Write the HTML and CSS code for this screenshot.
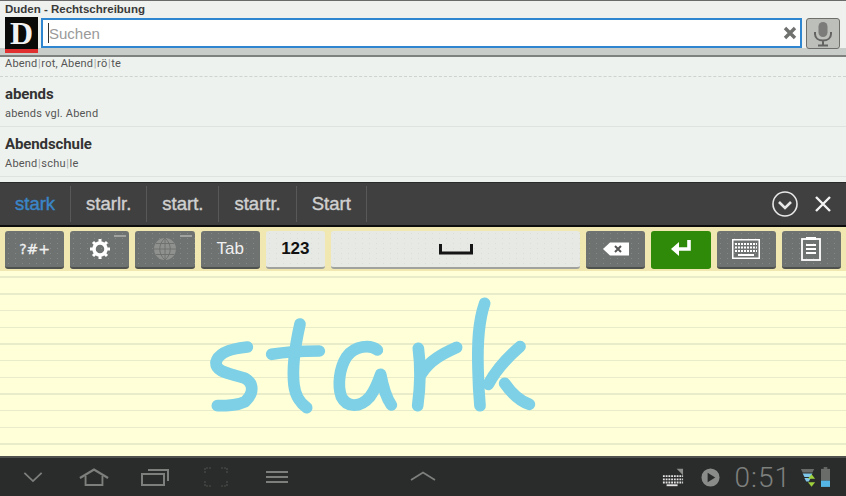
FILE: index.html
```html
<!DOCTYPE html>
<html lang="de">
<head>
    <meta charset="UTF-8">
    <title>Duden - Rechtschreibung</title>
    <link rel="stylesheet" href="styles.css">
</head>
<body>
    <div class="header">
        <div class="app-title">Duden - Rechtschreibung</div>
        <div class="search-row">
            <div class="logo"><span class="logo-letter">D</span></div>
            <div class="search-box">
                <span class="caret"></span>
                <span class="placeholder">Suchen</span>
                <svg class="clear-icon" width="16" height="16" viewBox="0 0 16 16"><path d="M3 3L13 13M13 3L3 13" stroke="#6f716f" stroke-width="3.4" fill="none"/></svg>
            </div>
            <div class="mic-button">
                <svg width="20" height="26" viewBox="0 0 20 26"><rect x="5.5" y="1" width="9" height="15" rx="4.5" fill="#7c7d7a"/><path d="M2 11v2c0 4 3.5 6.5 8 6.5s8-2.500 8-6.500v-2M10 19.500V24M5 24.500h10" stroke="#636462" stroke-width="2" fill="none"/></svg>
            </div>
        </div>
    </div>

    <div class="results">
        <div class="result result-cut">
            <div class="result-sub">Abend<span class="sep">|</span>rot, Abend<span class="sep">|</span>rö<span class="sep">|</span>te</div>
        </div>
        <div class="result">
            <div class="result-title">abends</div>
            <div class="result-sub">abends vgl. Abend</div>
        </div>
        <div class="result">
            <div class="result-title">Abendschule</div>
            <div class="result-sub">Abend<span class="sep">|</span>schu<span class="sep">|</span>le</div>
        </div>
    </div>

    <div class="candidates">
        <div class="candidate candidate-active">stark</div>
        <div class="candidate">starlr.</div>
        <div class="candidate">start.</div>
        <div class="candidate">startr.</div>
        <div class="candidate">Start</div>
        <div class="candidate-actions">
            <svg width="28" height="28" viewBox="0 0 28 28"><circle cx="14" cy="14" r="12" stroke="#e8e8e8" stroke-width="1.6" fill="none"/><path d="M8 12l6 6 6-6" stroke="#e8e8e8" stroke-width="2.600" fill="none"/></svg>
            <svg width="18" height="18" viewBox="0 0 18 18"><path d="M2 2L16 16M16 2L2 16" stroke="#f4f4f4" stroke-width="2.400" fill="none"/></svg>
        </div>
    </div>

    <div class="keys">
        <div class="key key-sym">?#+</div>
        <div class="key key-mark">
            <svg width="22" height="22" viewBox="0 0 22 22"><circle cx="11" cy="11" r="6" stroke="#fff" stroke-width="3.500" fill="none"/><path d="M11 1v4M11 17v4M1 11h4M17 11h4M4 4l3 3M15 15l3 3M18 4l-3 3M7 15l-3 3" stroke="#fff" stroke-width="3"/></svg>
        </div>
        <div class="key key-mark">
            <svg width="24" height="24" viewBox="0 0 24 24"><circle cx="12" cy="12" r="11" fill="#8f918e"/><path d="M12 1v22M1 12h22M3 6.500h18M3 17.500h18M12 1c-7 6-7 16 0 22M12 1c7 6 7 16 0 22" stroke="#6f726f" stroke-width="1" fill="none"/></svg>
        </div>
        <div class="key key-tab">Tab</div>
        <div class="key key-light key-num">123</div>
        <div class="key key-light key-space">
            <svg width="34" height="12" viewBox="0 0 34 12"><path d="M1.500 1v9h31V1" stroke="#161616" stroke-width="3" fill="none"/></svg>
        </div>
        <div class="key">
            <svg width="26" height="14" viewBox="0 0 26 14"><path d="M7 0.500h19v13H7L0 7z" fill="#fff"/><path d="M12 4l6 6M18 4l-6 6" stroke="#555" stroke-width="2"/></svg>
        </div>
        <div class="key key-enter">
            <svg width="22" height="20" viewBox="0 0 22 20"><path d="M19 1v9H6" stroke="#fff" stroke-width="3.600" fill="none"/><path d="M9 3L1 10l8 7z" fill="#fff"/></svg>
        </div>
        <div class="key">
            <svg width="28" height="20" viewBox="0 0 28 20"><rect x="0.750" y="0.750" width="26.500" height="18.500" fill="none" stroke="#fff" stroke-width="1.500"/><path d="M3 5h22M3 8.500h22M3 12h22" stroke="#fff" stroke-width="2" stroke-dasharray="2 1"/><path d="M6 16h16" stroke="#fff" stroke-width="2"/></svg>
        </div>
        <div class="key">
            <svg width="20" height="24" viewBox="0 0 20 24"><rect x="1" y="2" width="18" height="21" fill="none" stroke="#fff" stroke-width="1.800"/><rect x="5" y="0" width="10" height="3" fill="#fff"/><path d="M5 8h10M5 12h10M5 16h10" stroke="#fff" stroke-width="1.800"/></svg>
        </div>
    </div>

    <div class="pad">
        <!-- pen strokes of the handwriting pad -->
        <svg class="ink" width="360" height="135" viewBox="0 0 1080 405" role="img" aria-label="stark">
            <g fill="none" stroke="#7dd0e6" stroke-width="35" stroke-linecap="round" stroke-linejoin="round">
                <path d="M172 186C130 190 85 200 78 232C76 262 120 265 165 280C192 295 192 325 165 350C140 362 110 362 82 362"/>
                <path d="M330 117C318 170 305 240 312 300C316 335 335 358 350 368"/>
                <path d="M245 208C290 200 345 198 388 198"/>
                <path d="M562 195C540 178 495 182 470 215C448 250 442 300 454 335C470 368 510 370 540 335C558 310 566 285 572 268C578 300 590 340 604 360"/>
                <path d="M685 190C692 240 690 310 683 362"/>
                <path d="M695 265C720 225 760 205 800 187"/>
                <path d="M884 55C865 110 862 170 864 250C865 300 868 340 870 362"/>
                <path d="M990 185C955 215 915 260 895 298"/>
                <path d="M944 295C965 325 990 348 1018 358"/>
            </g>
        </svg>
    </div>

    <div class="navbar">
        <div class="nav-left">
            <svg width="20" height="12" viewBox="0 0 22 12"><path d="M1.500 1.500L11 10.500 20.500 1.500" stroke="#7d7f7d" stroke-width="2" fill="none"/></svg>
            <svg width="30" height="20" viewBox="0 0 32 20"><path d="M1 11L16 2 31 11" stroke="#7d7f7d" stroke-width="2.400" fill="none"/><path d="M7 9v9.500h18V9" stroke="#7d7f7d" stroke-width="2" fill="none"/></svg>
            <svg width="28" height="18" viewBox="0 0 28 18"><rect x="1" y="6" width="22" height="11" stroke="#7d7f7d" stroke-width="2" fill="none"/><path d="M7 2h20v11" stroke="#7d7f7d" stroke-width="2" fill="none"/></svg>
            <svg width="24" height="20" viewBox="0 0 24 20"><path d="M1 6V1h6M17 1h6v5M23 14v5h-6M7 19H1v-5" stroke="#4c4e4c" stroke-width="1.200" stroke-dasharray="2 1" fill="none"/></svg>
            <svg width="22" height="14" viewBox="0 0 22 14"><path d="M0 2h22M0 7h22M0 12h22" stroke="#7d7f7d" stroke-width="2"/></svg>
        </div>
        <svg class="nav-up" width="26" height="10" viewBox="0 0 26 10"><path d="M1 9L13 1.500 25 9" stroke="#7d7f7d" stroke-width="1.800" fill="none"/></svg>
        <div class="nav-right">
            <svg class="tray-keyboard" width="22" height="20" viewBox="0 0 24 20"><path d="M16 1h7v7z" fill="#8c8e8c"/><path d="M1 9h22M1 12.500h22M1 16h22" stroke="#e4e4e4" stroke-width="2" stroke-dasharray="2 1"/><path d="M5 19h12" stroke="#e4e4e4" stroke-width="2"/></svg>
            <svg class="tray-play" width="19" height="19" viewBox="0 0 20 20"><circle cx="10" cy="10" r="9.500" fill="#8a8c8a"/><path d="M7 5l8 5-8 5z" fill="#2a2c2b"/></svg>
            <span class="clock">0:51</span>
            <svg class="signal" width="16" height="22" viewBox="0 0 18 22"><path d="M1 2h15l-2 4H3z" fill="#6a6c6a"/><path d="M3 7h11l-2 4H5z" fill="#7fc6e8"/><path d="M5 12h7l-2 4H7z" fill="#7fc6e8"/><path d="M13 8l4 5h-8zM13 22l-4-5h8z" fill="#9ed13c"/></svg>
            <svg width="9" height="22" viewBox="0 0 10 22"><rect x="3" y="0" width="4" height="2" fill="#6a6c6a"/><rect x="0" y="2" width="10" height="13" fill="#6a6c6a"/><rect x="0" y="15" width="10" height="7" fill="#55b6e6"/></svg>
        </div>
    </div>
</body>
</html>
```

FILE: styles.css
```css
* {
    box-sizing: border-box;
}
body {
    margin: 0;
    width: 846px;
    height: 496px;
    overflow: hidden;
    display: flex;
    flex-direction: column;
    font-family: "Liberation Sans", sans-serif;
    background-color: #eef2ee;
}

/* top bar */
.header {
    height: 57px;
    flex: none;
    border-top: 1px solid #6a6a6a;
    border-bottom: 2px solid #7f817f;
    background: linear-gradient(to bottom, #eef1ee 0, #eef1ee 47px, #c9cdc9 47px);
}
.app-title {
    height: 16px;
    padding-left: 5px;
    font-size: 11.500px;
    line-height: 16px;
    font-weight: bold;
    color: #3a3a3a;
}
.search-row {
    display: flex;
    align-items: flex-start;
    height: 36px;
    padding: 0 6px 0 5px;
}
.logo {
    width: 33px;
    height: 36px;
    padding-top: 2px;
    background-color: #0a0a08;
    border-bottom: 4px solid #e03030;
    display: flex;
    justify-content: center;
    font-family: "Liberation Serif", serif;
}
.logo-letter {
    font-size: 32px;
    line-height: 28px;
    font-weight: bold;
    color: #f2f2f2;
}
.search-box {
    flex: 1;
    height: 30px;
    margin: 1px 4px 0 3px;
    padding: 0 2px 0 5px;
    display: flex;
    align-items: center;
    background-color: #fff;
    border: 2px solid #2f86d0;
}
.caret {
    width: 1px;
    height: 20px;
    background-color: #333;
}
.placeholder {
    flex: 1;
    font-size: 15px;
    color: #9a9a9a;
}
.mic-button {
    width: 34px;
    height: 31px;
    margin-top: 1px;
    display: flex;
    justify-content: center;
    align-items: center;
    background-color: #bdbfbb;
    border: 1px solid #6e6e6a;
    border-radius: 3px;
}

/* search results */
.results {
    height: 125px;
    flex: none;
    overflow: hidden;
    background-color: #eef2ee;
    color: #333;
    font-family: Roboto, sans-serif;
}
.result {
    height: 50px;
    padding: 0 5px;
    border-bottom: 1px solid #dfe3df;
}
.result-cut {
    height: 20px;
    border-bottom: 1px dashed #cfd3cf;
}
.result-cut .result-sub {
    line-height: 13px;
}
.result-title {
    padding-top: 5px;
    font-size: 15px;
    line-height: 24px;
    font-weight: 700;
    letter-spacing: -0.1px;
    color: #333;
}
.result-sub {
    font-size: 11px;
    line-height: 16px;
    letter-spacing: 0.2px;
    color: #555;
}
.sep {
    margin: 0 0.5px;
    color: #a4a6a4;
}

/* word candidates */
.candidates {
    height: 45px;
    flex: none;
    display: flex;
    align-items: center;
    background-color: #404040;
    border-top: 1px solid #2a2a2a;
    border-bottom: 2px solid #0e0e0e;
}
.candidate {
    height: 36px;
    padding: 0 15px;
    border-right: 1px solid #585858;
    font-size: 18.500px;
    line-height: 35px;
    color: #d0d0d0;
    -webkit-text-stroke: 0.4px;
}
.candidate-active {
    color: #3a86c8;
}
.candidate-actions {
    margin-left: auto;
    display: flex;
    align-items: center;
    gap: 15px;
    padding-right: 14px;
}

/* key row */
.keys {
    height: 44px;
    flex: none;
    display: flex;
    gap: 6px;
    padding: 4px 5px 2px;
    background-color: #f0e8b0;
}
.key {
    position: relative;
    width: 59.200px;
    height: 38px;
    display: flex;
    justify-content: center;
    align-items: center;
    background-color: #6e7270;
    background-image: radial-gradient(#858886 0.5px, transparent 0.7px);
    background-size: 7px 5px;
    border-bottom: 2px solid #4f514f;
    border-radius: 3px;
    font-size: 15px;
    color: #f0f0f0;
}
.key-sym {
    font-family: "DejaVu Sans", sans-serif;
    font-size: 14px;
    -webkit-text-stroke: 0.3px;
}
.key-mark::after {
    content: "";
    position: absolute;
    top: 4px;
    right: 3px;
    width: 12px;
    height: 2px;
    background-color: #a0a29f;
}
.key-tab {
    font-size: 17px;
}
.key-light {
    background-color: #e6e9e4;
    background-image: radial-gradient(#dbdeda 0.5px, transparent 0.7px);
    border-bottom-color: #a0a29e;
    color: #111;
}
.key-num {
    font-family: "Liberation Sans", sans-serif;
    font-size: 17px;
    font-weight: bold;
}
.key-space {
    flex: 1;
}
.key-enter {
    background-color: #2e8a08;
    background-image: none;
    border-bottom-color: #2e8a08;
}

/* handwriting pad */
.pad {
    position: relative;
    flex: 1;
    background-color: #ffffd8;
    background-image: repeating-linear-gradient(to bottom, transparent 0, transparent 5.500px, #e9ecc9 5.500px, #e9ecc9 7px, transparent 7px, transparent 16.670px);
}
.ink {
    position: absolute;
    left: 190px;
    top: 14px;
}

/* system bar */
.navbar {
    position: relative;
    height: 40px;
    flex: none;
    display: flex;
    align-items: center;
    justify-content: space-between;
    background-color: #2a2c2b;
    border-top: 2px solid #50524e;
}
.nav-left {
    display: grid;
    grid-template-columns: repeat(5, 61px);
    justify-items: center;
    align-items: center;
    padding-left: 2px;
}
.nav-up {
    position: absolute;
    left: 410px;
    top: 13px;
}
.nav-right {
    display: flex;
    align-items: center;
    padding-right: 16px;
}
.tray-play {
    margin-left: 17px;
}
.clock {
    margin-left: 15px;
    font-family: Roboto, sans-serif;
    font-weight: 300;
    font-size: 28px;
    letter-spacing: 1px;
    color: #7e807e;
}
.signal {
    margin-left: 9px;
    margin-right: 5px;
}
```
